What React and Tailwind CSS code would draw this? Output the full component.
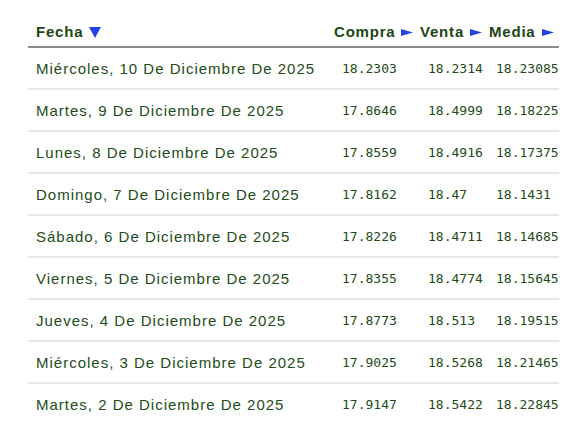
import React from 'react';

const ROWS = [
    ['Miércoles, 10 De Diciembre De 2025', '18.2303', '18.2314', '18.23085'],
    ['Martes, 9 De Diciembre De 2025', '17.8646', '18.4999', '18.18225'],
    ['Lunes, 8 De Diciembre De 2025', '17.8559', '18.4916', '18.17375'],
    ['Domingo, 7 De Diciembre De 2025', '17.8162', '18.47', '18.1431'],
    ['Sábado, 6 De Diciembre De 2025', '17.8226', '18.4711', '18.14685'],
    ['Viernes, 5 De Diciembre De 2025', '17.8355', '18.4774', '18.15645'],
    ['Jueves, 4 De Diciembre De 2025', '17.8773', '18.513', '18.19515'],
    ['Miércoles, 3 De Diciembre De 2025', '17.9025', '18.5268', '18.21465'],
    ['Martes, 2 De Diciembre De 2025', '17.9147', '18.5422', '18.22845'],
];

const COLS = 'grid grid-cols-[306px_86px_69px_70px]';

const DownArrow = () => (
    <svg width="12" height="11" viewBox="0 0 12 11" className="shrink-0">
        <polygon points="0,0 12,0 6,11" fill="#2442e8" />
    </svg>
);

const RightArrow = () => (
    <svg width="12" height="7" viewBox="0 0 12 7" className="shrink-0">
        <polygon points="0,0 12,3.5 0,7" fill="#2442e8" />
    </svg>
);

const HeadCell = ({ label, arrow, className = '' }) => (
    <div className={`flex items-center gap-[6px] ${className}`}>
        <span>{label}</span>
        {arrow}
    </div>
);

export default function App() {
    return (
        <div className="w-[584px] h-[422px] overflow-hidden bg-white pl-[28px] pt-[18px]">
            <div className="w-[531px]">
                <div className={`${COLS} h-[30px] items-center border-b-2 border-[#8c8c8c] text-[15px] font-bold tracking-[0.8px] text-[#1d4614] font-['Liberation_Sans',Arial,sans-serif]`}>
                    <HeadCell label="Fecha" arrow={<DownArrow />} className="pl-2" />
                    <HeadCell label="Compra" arrow={<RightArrow />} />
                    <HeadCell label="Venta" arrow={<RightArrow />} />
                    <HeadCell label="Media" arrow={<RightArrow />} />
                </div>
                {ROWS.map(([fecha, compra, venta, media]) => (
                    <div key={fecha} className={`${COLS} h-[42px] items-center border-b-2 border-[#e8e8e8] text-[#234b18]`}>
                        <div className="pl-2 pt-[2px] text-[15px] tracking-[1px] font-['Liberation_Sans',Arial,sans-serif] whitespace-nowrap">{fecha}</div>
                        <div className="pl-2 pt-[2px] text-[13px] font-['DejaVu_Sans_Mono',monospace]">{compra}</div>
                        <div className="pl-2 pt-[2px] text-[13px] font-['DejaVu_Sans_Mono',monospace]">{venta}</div>
                        <div className="pl-[7px] pt-[2px] text-[13px] font-['DejaVu_Sans_Mono',monospace]">{media}</div>
                    </div>
                ))}
            </div>
        </div>
    );
}
